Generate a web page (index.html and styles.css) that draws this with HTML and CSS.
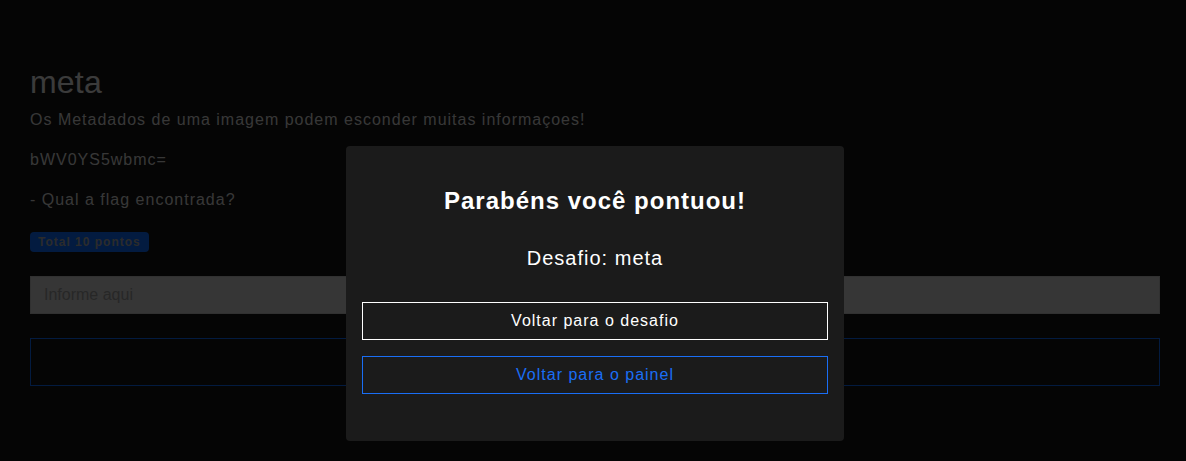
FILE: index.html
```html
<!DOCTYPE html>
<html lang="pt-BR">
<head>
<meta charset="utf-8">
<title>meta</title>
<link rel="stylesheet" href="styles.css">
</head>
<body>
<main class="page">
  <h1 class="title">meta</h1>
  <p class="text">Os Metadados de uma imagem podem esconder muitas informaçoes!</p>
  <p class="text">bWV0YS5wbmc=</p>
  <p class="text">- Qual a flag encontrada?</p>
  <span class="badge">Total 10 pontos</span>
  <input class="answer" type="text" placeholder="Informe aqui">
  <div class="submit-box"></div>
</main>
<div class="overlay">
  <div class="modal">
    <h2 class="modal-title">Parabéns você pontuou!</h2>
    <p class="modal-sub">Desafio: meta</p>
    <button class="btn btn-light">Voltar para o desafio</button>
    <button class="btn btn-blue">Voltar para o painel</button>
  </div>
</div>
</body>
</html>
```
FILE: styles.css
```css
* { box-sizing: border-box; }
html, body { margin: 0; height: 100%; }
body {
  background: #141414;
  font-family: "Liberation Sans", Arial, sans-serif;
  color: #dcdcdc;
  letter-spacing: 1px;
}
.page {
  padding: 63px 26px 0 30px;
  display: flex;
  flex-direction: column;
  align-items: flex-start;
}
.title {
  margin: 0 0 7px;
  font-size: 32px;
  font-weight: 400;
  line-height: 1.2;
  letter-spacing: 0.2px;
  color: #eaeaea;
}
.text {
  margin: 0 0 16px;
  font-size: 16px;
  line-height: 24px;
}
.badge {
  margin-top: 4px;
  display: inline-block;
  background: #0d6efd;
  color: #adadad;
  font-size: 12px;
  font-weight: 700;
  line-height: 20px;
  height: 20px;
  padding: 0 8px;
  border-radius: 4px;
}
.answer {
  margin-top: 24px;
  width: 100%;
  height: 38px;
  background: #d6d6d6;
  border: 1px solid #c4c4c4;
  padding: 0 13px;
  font: inherit;
  font-size: 16px;
  letter-spacing: 0;
}
.answer::placeholder { color: #9c9c9c; }
.submit-box {
  margin-top: 24px;
  width: 100%;
  height: 48px;
  border: 1px solid #0d6efd;
}
.overlay {
  position: fixed;
  inset: 0;
  background: rgba(0, 0, 0, 0.75);
  display: flex;
  justify-content: center;
  align-items: flex-start;
  padding: 146px 0 0 4px;
}
.modal {
  width: 498px;
  height: 295px;
  background: #1b1b1b;
  border-radius: 4px;
  padding: 41px 16px 0;
  display: flex;
  flex-direction: column;
  align-items: stretch;
  text-align: center;
}
.modal-title {
  margin: 0;
  font-size: 24px;
  line-height: 28px;
  font-weight: 700;
  color: #fff;
}
.modal-sub {
  margin: 31px 0 0;
  font-size: 20px;
  line-height: 24px;
  color: #fff;
}
.btn {
  height: 38px;
  background: #1b1b1b;
  font-family: inherit;
  font-size: 16px;
  letter-spacing: 1px;
  cursor: pointer;
}
.btn-light {
  margin-top: 32px;
  border: 1px solid #fff;
  color: #fff;
}
.btn-blue {
  margin-top: 16px;
  border: 1px solid #1a6ef5;
  color: #1a6ef5;
}
```
